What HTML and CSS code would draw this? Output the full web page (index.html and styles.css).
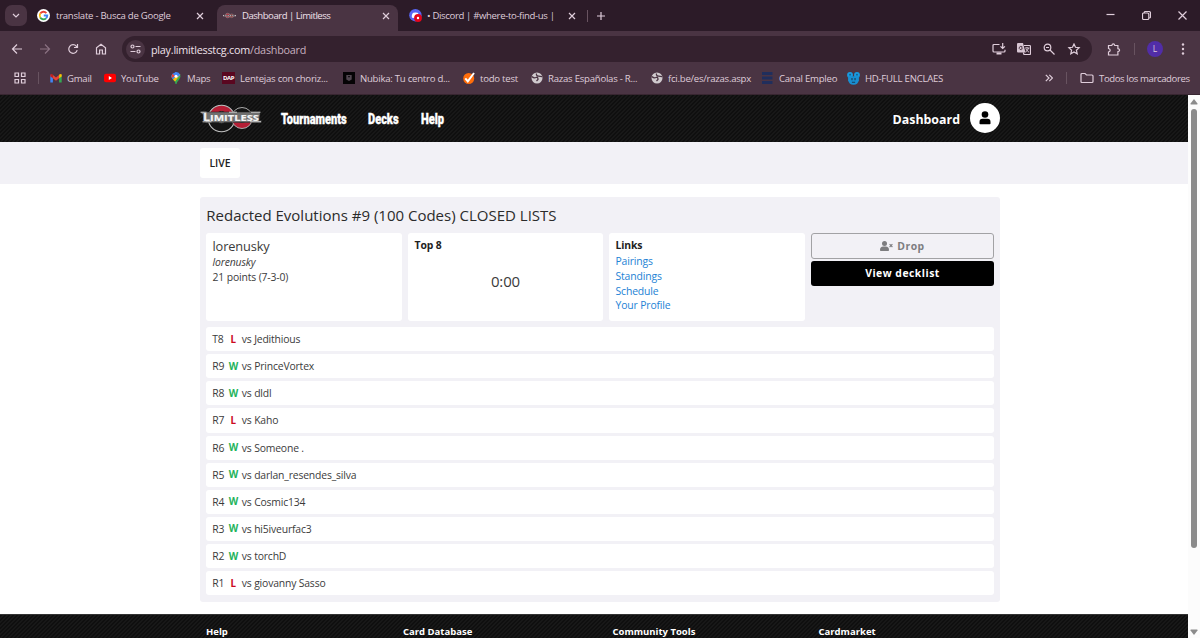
FILE: index.html
```html
<!DOCTYPE html>
<html lang="es">
<head>
    <meta charset="UTF-8">
    <meta name="viewport" content="width=device-width, initial-scale=1.0">
    <title>Dashboard | Limitless</title>
    <link rel="stylesheet" href="styles.css">
</head>
<body>
    <!-- Browser window -->
    <div class="browser">
        <div class="tabs">
            <button class="tab-search"><svg width="8" height="6" viewBox="0 0 8 6"><path d="M1 1l3 3 3-3"/></svg></button>
            <div class="tab tab-google">
                <svg class="fav" viewBox="0 0 24 24"><circle cx="12" cy="12" r="12" fill="#fff"/><g fill="none" stroke-width="3.4"><path d="M17.3 7.5A7 7 0 0 0 6 8.4" stroke="#ea4335"/><path d="M6 8.4a7 7 0 0 0 0 7.2" stroke="#fbbc05"/><path d="M6 15.6a7 7 0 0 0 10.7 1.6" stroke="#34a853"/><path d="M16.7 17.2A7 7 0 0 0 19 12h-6.5" stroke="#4285f4"/></g></svg>
                <span class="tab-title">translate - Busca de Google</span>
                <svg class="close" viewBox="0 0 8 8"><path d="M1 1l6 6M7 1L1 7"/></svg>
            </div>
            <div class="tab tab-active">
                <svg class="fav" viewBox="0 0 13 13"><circle cx="4.700" cy="6.500" r="2.300" fill="#a83240" stroke="#999" stroke-width=".5"/><circle cx="8.700" cy="6.800" r="1.900" fill="#933" stroke="#888" stroke-width=".5"/><path d="M0 6.600h13" stroke="#c5bdc2" stroke-width="1.300"/><path d="M1 6.600h11" stroke="#3b3035" stroke-width=".8" stroke-dasharray="1.500 .8"/></svg>
                <span class="tab-title">Dashboard | Limitless</span>
                <svg class="close" viewBox="0 0 8 8"><path d="M1 1l6 6M7 1L1 7"/></svg>
            </div>
            <div class="tab tab-discord">
                <svg class="fav" viewBox="0 0 13 13"><circle cx="6.400" cy="6.200" r="6.200" fill="#5865f2"/><path d="M3 8.700c-.7-2 .2-4.300 1.300-4.900q2.100-.7 4.200 0c.8.7 1.200 1.500 1.400 2.800L7 9.200z" fill="#fff"/><circle cx="9" cy="9" r="3.900" fill="#e3061b"/><circle cx="9" cy="9" r="1.200" fill="#fff"/></svg>
                <span class="tab-title">• Discord | #where-to-find-us |</span>
                <svg class="close" viewBox="0 0 8 8"><path d="M1 1l6 6M7 1L1 7"/></svg>
            </div>
            <span class="divider"></span>
            <svg class="new-tab" viewBox="0 0 8 8"><path d="M4 0v8M0 4h8"/></svg>
            <div class="window-buttons">
                <svg width="9" height="9" viewBox="0 0 9 9"><path d="M.5 3.500h8"/></svg>
                <svg width="9" height="9" viewBox="0 0 9 9"><rect x=".5" y="2" width="6.300" height="6.500" rx="1.200"/><path d="M2.300 2V1.600Q2.300.5 3.500.5h3.300q1.700 0 1.700 1.700v3.600q0 1-1.200 1"/></svg>
                <svg width="9" height="9" viewBox="0 0 9 9"><path d="M.5.5l8 8M8.500.5l-8 8"/></svg>
            </div>
        </div>

        <div class="toolbar">
            <div class="nav-icons">
                <svg viewBox="0 0 12 12"><path d="M11 6H1.700M6 1.500L1.500 6 6 10.500"/></svg>
                <svg class="disabled" viewBox="0 0 12 12"><path d="M1 6h9.300M6 1.500L10.500 6 6 10.500"/></svg>
                <svg viewBox="0 0 12 12"><path d="M10.200 7.200A4.300 4.300 0 1 1 9.400 3.300L10.400 4.500M10.500 1v3.500H7"/></svg>
                <svg viewBox="0 0 12 12"><path d="M1.500 11V4.700L6 1.200l4.500 3.500V11H7.400V7H4.600v4z"/></svg>
            </div>
            <div class="address">
                <span class="site-info"><svg width="11" height="10" viewBox="0 0 11 10"><circle cx="2.500" cy="2.500" r="1.500"/><path d="M5.500 2.500h5M.5 7.500h5"/><circle cx="8.500" cy="7.500" r="1.500"/></svg></span>
                <span class="url">play.limitlesstcg.com<span>/dashboard</span></span>
                <div class="address-icons">
                    <svg viewBox="0 0 14 12"><path d="M7.500 1.500H2q-1 0-1 1V8q0 1 1 1h10q1 0 1-1V6.800M10.700 0v5M8.500 3.300l2.200 2.200 2.200-2.200"/><path d="M4.500 10.500h5" stroke-width="2"/></svg>
                    <svg viewBox="0 0 14 12"><path d="M1 0h5l2.500 9.500H1q-1 0-1-1V1q0-1 1-1z" fill="#d7c5d2" stroke="none"/><path d="M7 2.500h5.500q1 0 1 1V10.500q0 1-1 1H7L6.300 9.500" /><path d="M5.300 4H4M5.500 5.200H4M5.300 4a1.700 1.700 0 1 0 .2 1.600" stroke="#4a3443" stroke-width=".9"/><path d="M8 5h4.500M10 4v1M11.500 5q-.5 2.500-3 4M9 6q1 2 3 3.200" stroke-width=".9"/></svg>
                    <svg viewBox="0 0 14 12"><circle cx="5.500" cy="4.500" r="3.300"/><path d="M8 7l4.500 4.500M4 4.500h3"/></svg>
                    <svg viewBox="0 0 14 12"><path d="M7 1l1.500 3.300 3.600.4-2.700 2.500.8 3.600L7 9l-3.200 1.800.8-3.600L1.900 4.700l3.600-.4z"/></svg>
                </div>
            </div>
            <svg class="extensions" viewBox="0 0 14 13"><path d="M1.500 2.500h3.300q.3-1.600 1.500-1.600t1.500 1.600h3.100v3.200q1.700.3 1.700 1.500t-1.700 1.500V12H1.500V9q1.700-.5 1.700-1.800T1.500 5.500z"/></svg>
            <span class="divider"></span>
            <span class="profile">L</span>
            <svg class="more" viewBox="0 0 4 12"><circle cx="2" cy="1.500" r="1.200"/><circle cx="2" cy="6" r="1.200"/><circle cx="2" cy="10.500" r="1.200"/></svg>
        </div>

        <div class="bookmarks">
            <svg class="apps" viewBox="0 0 12 12"><path d="M1 1h3.500v3.500H1zM7.500 1H11v3.500H7.500zM1 7.500h3.500V11H1zM7.500 7.500H11V11H7.500z"/></svg>
            <span class="divider"></span>
            <div class="bookmark-list">
                <a><svg viewBox="0 0 12 12"><path d="M.3 2.500v8h2.600V5z" fill="#4285f4"/><path d="M11.700 2.500v8H9.100V5z" fill="#34a853"/><path d="M2.900 3L6 5.400 9.100 3v3.300L6 8.700 2.900 6.300z" fill="#ea4335"/><path d="M.3 2.800q.3-1.600 2.600-.3v3.800L.3 4.400z" fill="#c5221f"/><path d="M11.700 2.800q-.3-1.600-2.600-.3v3.800l2.600-1.900z" fill="#fbbc04"/></svg><span>Gmail</span></a>
                <a><svg viewBox="0 0 12 12"><rect y="1.800" width="12" height="8.400" rx="2" fill="#f00"/><path d="M4.800 4v4L8 6z" fill="#fff"/></svg><span>YouTube</span></a>
                <a><svg viewBox="0 0 12 12"><path d="M5.500 12Q5.200 9.500 3 7.500 1.500 6 1.500 4.300L6 4.500l4.300-1.700q.8 2.600-1.100 4.600Q7 9.600 6.500 12z" fill="#34a853"/><path d="M2.500 1.800L6 0v4L3 7.500Q1.500 6 1.400 4.300 1.400 3 2.500 1.800z" fill="#4285f4"/><path d="M2.500 1.800L5 4 1.800 6Q1 3.500 2.500 1.800z" fill="#ea4335"/><path d="M3 7.500l5-5.700 2.300 1L5.100 9.500z" fill="#fbbc04"/><path d="M5 .2q3.500-.9 5.300 2.600L7.500 5.400 4.700 3z" fill="#4285f4"/><circle cx="6" cy="4.300" r="1.500" fill="#fff"/></svg><span>Maps</span></a>
                <a><b class="dap">DAP</b><span>Lentejas con choriz...</span></a>
                <a><svg viewBox="0 0 12 12"><path d="M0 0h12v12H0z" fill="#050305"/><path d="M3.300 3h5.400v4.500L6 9 3.300 7.500z" fill="#514750"/><path d="M5 4.700h2" stroke="#171217"/></svg><span>Nubika: Tu centro d...</span></a>
                <a><svg viewBox="0 0 12 12"><circle cx="5.700" cy="6.500" r="5.500" fill="#ff6d0a"/><path d="M2.300 6.300l2.500 3L11 1" fill="none" stroke="#fff" stroke-width="2"/></svg><span>todo test</span></a>
                <a><svg viewBox="0 0 12 12"><circle cx="6" cy="6" r="5.500" fill="#d0cace"/><path d="M.8 4.500Q3 6.500 5 5.500T7 7.500L5.500 9M5.500 1.500Q5 4 7.500 4.200L11 4.700" fill="none" stroke="#4a3443" stroke-width="1.300"/></svg><span>Razas Españolas - R...</span></a>
                <a><svg viewBox="0 0 12 12"><circle cx="6" cy="6" r="5.500" fill="#d0cace"/><path d="M.8 4.500Q3 6.500 5 5.500T7 7.500L5.500 9M5.500 1.500Q5 4 7.500 4.200L11 4.700" fill="none" stroke="#4a3443" stroke-width="1.300"/></svg><span>fci.be/es/razas.aspx</span></a>
                <a><svg viewBox="0 0 12 12"><path d="M0 1.500h10.500M0 6h10.500M0 10.500h10.500" stroke="#202e5c" stroke-width="2.800"/></svg><span>Canal Empleo</span></a>
                <a><svg class="hd" viewBox="0 0 12 12"><circle cx="2.800" cy="2.800" r="2.700" fill="#189be1"/><circle cx="9.200" cy="2.800" r="2.700" fill="#189be1"/><path d="M1 4h10v3.500Q10 11.800 6 11.800T1 7.500z" fill="#188fd2"/><path d="M4.600 5.500v2M7.400 5.500v2M4.500 9.500h3" stroke="#173b57" stroke-width="1"/><circle cx="2.800" cy="2.500" r=".8" fill="#145987"/><circle cx="9.200" cy="2.500" r=".8" fill="#145987"/></svg><span>HD-FULL ENCLAES</span></a>
            </div>
            <svg class="overflow" viewBox="0 0 8 8"><path d="M.8.8L4 4 .8 7.200M4.300.8L7.500 4 4.300 7.200"/></svg>
            <span class="divider"></span>
            <svg class="folder" viewBox="0 0 14 12"><path d="M1 9.500v-7q0-1 1-1h3L6.500 3H12q1 0 1 1v5.500q0 1-1 1H2q-1 0-1-1z"/></svg>
            <span class="all-bookmarks">Todos los marcadores</span>
        </div>
    </div>

    <!-- Page -->
    <div class="viewport">
        <div class="page">
            <header class="header">
                <div class="container header-inner">
                    <svg class="logo" width="62" height="30" viewBox="0 0 62 30">
                        <circle cx="21.500" cy="15.500" r="13.500" fill="#151515"/>
                        <path d="M8.500 15.500a13 13 0 0 1 26 0z" fill="#b51e35"/>
                        <circle cx="21.500" cy="15.500" r="13.300" fill="none" stroke="#c4c4c4" stroke-width="1.100"/>
                        <circle cx="42" cy="15" r="10.500" fill="#151515"/>
                        <path d="M31.500 15a10.500 10.500 0 0 0 21 0z" fill="#b51e35"/>
                        <circle cx="42" cy="15" r="10.500" fill="none" stroke="#aaa"/>
                        <circle cx="21.500" cy="14.500" r="6" fill="#c8c8c8" stroke="#151515"/>
                        <circle cx="42" cy="14.500" r="5" fill="#b5b5b5" stroke="#151515"/>
                        <path d="M1 9h59v2.500l-1 6h2.500v2H5.500V18H3v-6.500H2z" fill="#6f6f6f" stroke="#222" stroke-width=".5"/>
                        <text x="3" y="17.700" textLength="56" lengthAdjust="spacingAndGlyphs"><tspan class="cap">L</tspan>IMITLESS</text>
                        <path d="M.5 9.200h6M2.500 18.800h9M29 9.200h8M51 9.200h9.500M50 18.800h11" stroke="#ddd" stroke-width=".9"/>
                    </svg>
                    <nav class="main-nav">
                        <a class="nav-tournaments"><span>Tournaments</span></a>
                        <a class="nav-decks"><span>Decks</span></a>
                        <a><span>Help</span></a>
                    </nav>
                    <a class="dashboard-link">Dashboard</a>
                    <span class="avatar"><svg width="12" height="14" viewBox="0 0 12 14"><circle cx="6" cy="3.500" r="3.300"/><path d="M.5 12.500V11q0-3.300 3-3.300h5q3 0 3 3.300v1.500q0 .8-.8.8H1.300q-.8 0-.8-.8z"/></svg></span>
                </div>
            </header>
            <div class="subnav">
                <div class="container"><a class="live">LIVE</a></div>
            </div>

            <main class="container tournament">
                <h1>Redacted Evolutions #9 (100 Codes) CLOSED LISTS</h1>
                <div class="info">
                    <div class="card player">
                        <div class="name">lorenusky</div>
                        <div><i>lorenusky</i></div>
                        <div>21 points (7-3-0)</div>
                    </div>
                    <div class="card">
                        <h2>Top 8</h2>
                        <div class="timer">0:00</div>
                    </div>
                    <div class="card links">
                        <h2>Links</h2>
                        <a>Pairings</a>
                        <a>Standings</a>
                        <a>Schedule</a>
                        <a>Your Profile</a>
                    </div>
                    <div class="actions">
                        <button class="btn btn-drop"><svg width="13" height="10" viewBox="0 0 13 10"><circle cx="4.500" cy="2.500" r="2.500"/><path d="M0 9.200Q0 5.500 3.300 5.500h2.400Q9 5.500 9 9.200q0 .8-.8.8H.8Q0 10 0 9.200z"/><path d="M9.600 3.200l2.800 2.800M12.400 3.200L9.600 6" stroke="#7d7d80" stroke-width="1.100"/></svg>Drop</button>
                        <button class="btn btn-decklist">View decklist</button>
                    </div>
                </div>
                <div class="rounds">
                    <div class="round"><span>T8</span><b class="loss">L</b><span>vs Jedithious</span></div>
                    <div class="round"><span>R9</span><b class="win">W</b><span>vs PrinceVortex</span></div>
                    <div class="round"><span>R8</span><b class="win">W</b><span>vs dldl</span></div>
                    <div class="round"><span>R7</span><b class="loss">L</b><span>vs Kaho</span></div>
                    <div class="round"><span>R6</span><b class="win">W</b><span>vs Someone .</span></div>
                    <div class="round"><span>R5</span><b class="win">W</b><span>vs darlan_resendes_silva</span></div>
                    <div class="round"><span>R4</span><b class="win">W</b><span>vs Cosmic134</span></div>
                    <div class="round"><span>R3</span><b class="win">W</b><span>vs hi5iveurfac3</span></div>
                    <div class="round"><span>R2</span><b class="win">W</b><span>vs torchD</span></div>
                    <div class="round"><span>R1</span><b class="loss">L</b><span>vs giovanny Sasso</span></div>
                </div>
            </main>

            <footer class="footer">
                <div class="container footer-inner">
                    <b>Help</b>
                    <b>Card Database</b>
                    <b>Community Tools</b>
                    <b>Cardmarket</b>
                </div>
            </footer>
        </div>
        <div class="scrollbar">
            <svg width="8" height="6" viewBox="0 0 8 6"><path d="M4 0l3.500 4.500q.3 1-.6 1H1.100q-.9 0-.6-1z"/></svg>
            <div class="thumb"></div>
            <svg width="8" height="6" viewBox="0 0 8 6"><path d="M4 6L.5 1.500Q.2.500 1.100.5h5.800q.9 0 .6 1z"/></svg>
        </div>
    </div>
</body>
</html>
```
FILE: styles.css
```css
* {
    box-sizing: border-box;
}
body {
    margin: 0;
    height: 638px;
    overflow: hidden;
    display: flex;
    flex-direction: column;
    font-family: "Open Sans", sans-serif;
    font-size: 10.4px;
    color: #3b3b3b;
    background: #fff;
}
svg {
    display: block;
    flex: none;
}
button {
    font-family: inherit;
    padding: 0;
    border: none;
}
h1, h2 {
    margin: 0;
}

/* Browser window */
.browser {
    flex: none;
    height: 95px;
    background: #4a3443;
    border-bottom: 1px solid #382631;
    color: #dfccd9;
    font-size: 9.6px;
    white-space: nowrap;
}
.browser svg {
    fill: none;
    stroke: #e0cedb;
    stroke-width: 1.2;
}
.browser .fav, .bookmark-list svg {
    stroke: none;
}
.divider {
    flex: none;
    width: 1px;
    height: 12px;
    background: #685360;
}
.tabs {
    display: flex;
    align-items: center;
    height: 31px;
    background: #2c1b28;
}
.tab-search {
    display: flex;
    align-items: center;
    justify-content: center;
    width: 22px;
    height: 21px;
    margin-left: 5px;
    border-radius: 7px;
    background: #4a3443;
}
.tab {
    display: flex;
    align-items: center;
    height: 31px;
}
.fav {
    width: 13px;
    height: 13px;
}
.tab-title {
    flex: 1;
    margin-left: 6px;
}
.close {
    width: 8px;
    height: 8px;
}
.tab-google {
    width: 190px;
    padding: 0 13px 0 10px;
}
.tab-google .tab-title {
    letter-spacing: -0.28px;
}
.tab-active {
    align-self: flex-end;
    width: 181px;
    height: 26px;
    padding: 0 8px 5px 6px;
    border-radius: 8px 8px 0 0;
    background: #4a3443;
    color: #efe1eb;
}
.tab-active .tab-title {
    letter-spacing: -0.5px;
}
.tab-discord {
    width: 189px;
    padding: 0 11px 0 11px;
}
.tab-discord .tab-title {
    margin-left: 5px;
    letter-spacing: -0.36px;
}
.new-tab {
    width: 8px;
    height: 8px;
    margin-left: 9px;
}
.window-buttons {
    display: flex;
    gap: 27px;
    margin-left: auto;
    margin-right: 13px;
}
.toolbar {
    display: flex;
    align-items: center;
    height: 36px;
}
.nav-icons {
    display: flex;
    gap: 16px;
    width: 122px;
    padding-left: 11px;
}
.nav-icons svg {
    width: 12px;
    height: 12px;
}
.nav-icons .disabled {
    stroke: #8b7282;
}
.address {
    display: flex;
    align-items: center;
    width: 970px;
    height: 26px;
    padding: 0 11px 0 4px;
    border-radius: 13px;
    background: #34212e;
}
.site-info {
    display: flex;
    align-items: center;
    justify-content: center;
    width: 19px;
    height: 19px;
    border-radius: 50%;
    background: #4a3443;
}
.url {
    margin-left: 6px;
    font-size: 10.8px;
    letter-spacing: -0.24px;
    color: #efe1eb;
}
.url span {
    color: #c7b0bf;
}
.address-icons {
    display: flex;
    gap: 11px;
    margin-left: auto;
}
.address-icons svg {
    width: 14px;
    height: 12px;
}
.extensions {
    width: 14px;
    height: 13px;
    margin: 0 13px 0 15px;
}
.profile {
    width: 16px;
    height: 16px;
    margin-left: 12px;
    border-radius: 50%;
    background: #512da8;
    font-size: 8.5px;
    line-height: 16px;
    text-align: center;
}
.browser .more {
    width: 4px;
    height: 12px;
    margin-left: 18px;
    fill: #e0cedb;
    stroke: none;
}
.bookmarks {
    display: flex;
    align-items: center;
    height: 22px;
    font-size: 9.6px;
    letter-spacing: -0.25px;
}
.apps {
    width: 12px;
    height: 12px;
    margin: 0 12px 0 14px;
}
.bookmark-list {
    display: grid;
    grid-template-columns: 54px 66px 52px 121px 120px 68px 120px 111px 85px 148px;
    width: 995px;
    padding-left: 11px;
}
.bookmark-list a {
    display: flex;
    align-items: center;
    gap: 5px;
}
.bookmark-list svg {
    width: 12px;
    height: 12px;
}
.bookmark-list .hd {
    width: 13px;
    height: 13px;
}
.dap {
    width: 13px;
    height: 12px;
    background: #5a0720;
    color: #fff;
    font-size: 6px;
    line-height: 12px;
    letter-spacing: -0.4px;
    text-align: center;
}
.overflow {
    width: 8px;
    height: 8px;
    margin: 0 13px 0 11px;
}
.folder {
    width: 14px;
    height: 12px;
    margin: 0 5px 0 13px;
}
.all-bookmarks {
    letter-spacing: -0.4px;
}

/* Page */
.viewport {
    flex: 1;
    display: flex;
    min-height: 0;
}
.page {
    flex: 1;
    overflow: hidden;
}
.container {
    width: 800px;
    margin-left: 200px;
}
.header, .footer {
    background: linear-gradient(135deg, #0f0f0f 25%, #181818 25%, #181818 50%, #0f0f0f 50%, #0f0f0f 75%, #181818 75%);
    background-size: 4px 4px;
    color: #fff;
}
.header {
    height: 47px;
}
.header-inner {
    display: flex;
    align-items: center;
    height: 47px;
}
.logo {
    margin-bottom: 1px;
}
.logo text {
    fill: #f4f4f4;
    stroke: #f4f4f4;
    stroke-width: 0.2px;
    font: bold 9px "Open Sans", sans-serif;
}
.logo .cap {
    font-size: 10px;
}
.main-nav {
    display: flex;
    margin-left: 19px;
    padding-top: 1px;
    font: 900 15px Roboto, sans-serif;
    -webkit-text-stroke: 0.4px #fff;
}
.main-nav span {
    display: block;
    transform: scaleX(0.735);
    transform-origin: 0 50%;
}
.nav-tournaments {
    width: 87px;
}
.nav-decks {
    width: 53px;
}
.dashboard-link {
    margin-left: auto;
    padding-top: 1px;
    font-size: 12.4px;
    font-weight: bold;
}
.avatar {
    display: flex;
    align-items: center;
    justify-content: center;
    width: 30px;
    height: 30px;
    margin: 0 0 1px 10px;
    border-radius: 50%;
    background: #fff;
}
.subnav {
    height: 42px;
    padding-top: 6px;
    background: #f2f1f6;
}
.live {
    display: block;
    width: 40px;
    height: 30px;
    border-radius: 3px;
    background: #fff;
    color: #222;
    font-weight: 600;
    line-height: 30px;
    text-align: center;
}
.tournament {
    height: 405px;
    margin-top: 13px;
    padding: 6px;
    border-radius: 3px;
    background: #f2f1f6;
}
h1 {
    height: 30px;
    padding-left: 0.3px;
    font-size: 15px;
    font-weight: normal;
    line-height: 25px;
    color: #2b2b2b;
}
.info {
    display: grid;
    grid-template-columns: 196px 195px 196px 183px;
    gap: 6px;
    height: 88px;
}
.card {
    padding: 5px 6.5px;
    border-radius: 3px;
    background: #fff;
    line-height: 14.8px;
    letter-spacing: -0.14px;
}
.name {
    font-size: 12.8px;
    line-height: 17.4px;
}
h2 {
    font-size: 10.4px;
    line-height: 15px;
    color: #222;
}
.timer {
    margin-top: 17px;
    font-size: 15px;
    line-height: 22px;
    text-align: center;
}
.links a {
    display: block;
    color: #2382d5;
}
.links h2 {
    margin-bottom: 1px;
}
.btn {
    display: flex;
    align-items: center;
    justify-content: center;
    gap: 4px;
    width: 183px;
    height: 25px;
    border-radius: 3px;
    font-size: 10.4px;
    font-weight: bold;
    letter-spacing: 0.5px;
}
.btn-drop {
    height: 26px;
    margin-bottom: 2px;
    border: 1px solid #a2a2a5;
    background: none;
    color: #7d7d80;
}
.btn-drop svg {
    fill: #7d7d80;
}
.btn-decklist {
    padding-bottom: 1px;
    background: #000;
    color: #fff;
}
.rounds {
    display: flex;
    flex-direction: column;
    gap: 3px;
    margin-top: 6px;
}
.round {
    display: grid;
    grid-template-columns: 13.5px 16px 1fr;
    align-items: center;
    height: 24.14px;
    padding-left: 6.3px;
    border-radius: 3px;
    background: #fff;
    letter-spacing: -0.17px;
}
.round b {
    padding-right: 1px;
    text-align: center;
    font-size: 9.8px;
    font-weight: bold;
}
.win {
    color: #24b35c;
}
.loss {
    color: #cc0a1e;
}
.footer {
    height: 60px;
    margin-top: 12px;
    border-top: 1px solid #333;
}
.footer-inner {
    display: grid;
    grid-template-columns: 197px 209.5px 206px 1fr;
    padding: 10px 6px;
    font-size: 9.5px;
}
.scrollbar {
    display: flex;
    flex-direction: column;
    align-items: center;
    width: 12px;
    padding: 4px 0 3px;
    background: #fcfcfc;
}
.scrollbar svg {
    fill: #8b8b8b;
}
.thumb {
    width: 6px;
    height: 439px;
    margin: 4px 0 auto;
    border-radius: 3px;
    background: #8b8b8b;
}
```
